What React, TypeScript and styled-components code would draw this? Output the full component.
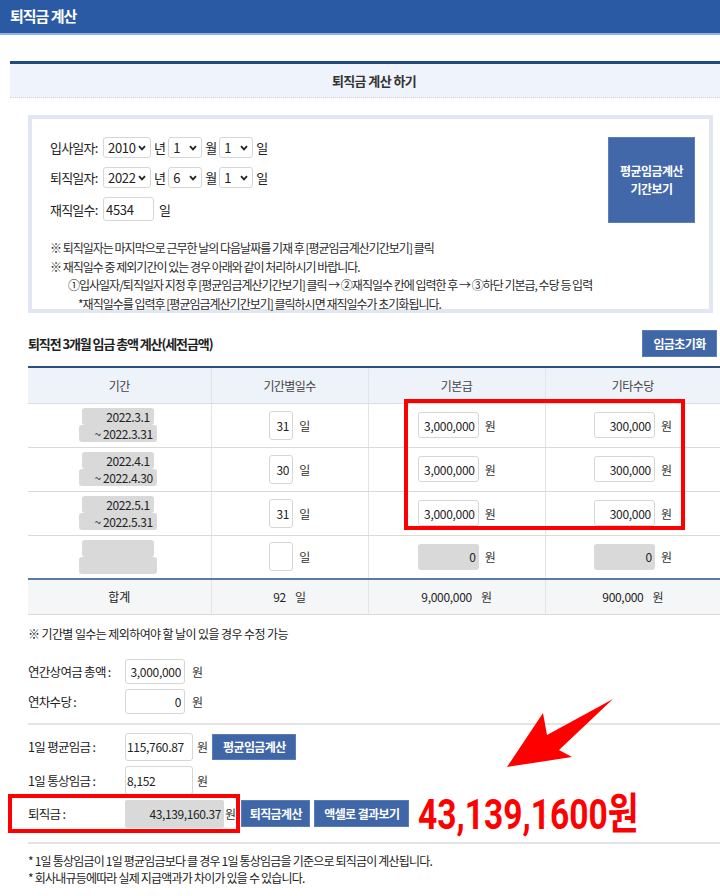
import React from "react";
import styled, { createGlobalStyle } from "styled-components";

const GlobalStyle = createGlobalStyle`
  * { box-sizing: border-box; }
  html, body { margin: 0; padding: 0; background: #ffffff; }
  body {
    font-family: "Noto Sans CJK KR", "Noto Sans", sans-serif;
    color: #333;
    font-size: 13px;
  }
  input, select, button { font-family: inherit; }
`;

const Page = styled.div`
  position: relative;
  width: 720px;
  height: 896px;
  overflow: hidden;
`;

const TopBar = styled.header`
  height: 35px;
  padding: 0 10px 3px;
  display: flex;
  align-items: center;
  background: #2a5aa4;
  border-bottom: 2px solid #93b3e3;
`;

const TopTitle = styled.h1`
  margin: 0;
  font-size: 15px;
  font-weight: 700;
  letter-spacing: -1px;
  color: #ffffff;
`;

const SectionHead = styled.div`
  width: 728px;
  height: 37px;
  margin: 26px 0 0 10px;
  display: flex;
  align-items: center;
  justify-content: center;
  background: #eff3fb;
  border-top: 3px solid #1e4a7d;
  border-bottom: 1px dotted #d4d4d4;
  font-size: 13px;
  font-weight: 700;
  letter-spacing: -0.6px;
  color: #333;
`;

const Content = styled.main`
  padding-left: 28px;
`;

const FormBox = styled.section`
  margin: 17px 7px 0 0;
  height: 198px;
  padding: 18px 14px 0 18px;
  border: 4px solid #e2e6f3;
`;

const FormTop = styled.div`
  display: flex;
  justify-content: space-between;
  align-items: flex-start;
`;

const FieldStack = styled.div`
  display: grid;
  row-gap: 9px;
`;

const DateRow = styled.div<{ $h?: number }>`
  display: flex;
  align-items: center;
  gap: 3px;
  height: ${(p) => p.$h ?? 21}px;
  font-size: 13px;
  letter-spacing: -0.8px;
  color: #222;
`;

const RowLabel = styled.span`
  width: 50px;
  white-space: nowrap;
`;

const SelectWrap = styled.span<{ $w: number }>`
  width: ${(p) => p.$w}px;
  height: 21px;
  display: inline-flex;
  align-items: center;
  border: 1px solid #d6d6d6;
  border-radius: 3px;
  background: #fff;
`;

const Select = styled.select`
  flex: 1;
  min-width: 0;
  height: 100%;
  padding: 0 0 0 4px;
  border: none;
  background: transparent;
  appearance: none;
  font-size: 13px;
  color: #222;
  letter-spacing: -0.3px;
  outline: none;
`;

const Chevron = styled.svg`
  width: 8px;
  height: 6px;
  margin-right: 4px;
  flex: none;
`;

const DaysField = styled.input`
  width: 51px;
  height: 24px;
  padding: 0 2px;
  border: 1px solid #d6d6d6;
  border-radius: 3px;
  font-size: 13px;
  color: #222;
  letter-spacing: -0.3px;
  margin-right: 2px;
`;

const PeriodButton = styled.button`
  width: 87px;
  height: 86px;
  border: 1px solid #5b7fba;
  background: #4268aa;
  color: #fff;
  font-size: 12px;
  font-weight: 700;
  line-height: 18px;
  letter-spacing: -0.5px;
  cursor: pointer;
`;

const Notes = styled.div`
  margin-top: 16px;
  font-size: 12px;
  line-height: 18.5px;
  letter-spacing: -1px;
  color: #2a2a2a;
`;

const NoteLine = styled.div<{ $indent?: number }>`
  padding-left: ${(p) => p.$indent ?? 0}px;
  white-space: nowrap;
`;

const SubHeader = styled.div`
  margin-top: 17px;
  padding-right: 3px;
  display: flex;
  justify-content: space-between;
  align-items: center;
`;

const SubTitle = styled.h2`
  margin: 0;
  font-size: 13px;
  font-weight: 700;
  letter-spacing: -1.1px;
  color: #222;
`;

const BlueButton = styled.button<{ $w: number; $h: number }>`
  width: ${(p) => p.$w}px;
  height: ${(p) => p.$h}px;
  padding: 0;
  border: 1px solid #5a7db8;
  background: #3f67a8;
  color: #fff;
  font-size: 12px;
  font-weight: 700;
  letter-spacing: -0.6px;
  white-space: nowrap;
  cursor: pointer;
`;

const WageTable = styled.table`
  margin-top: 9px;
  width: 692px;
  border-collapse: collapse;
  table-layout: fixed;
  border-top: 2px solid #2b4f80;
`;

const Th = styled.th`
  height: 36px;
  background: #eef2f9;
  font-size: 12px;
  font-weight: 400;
  color: #444;
  letter-spacing: -0.6px;
  border-right: 1px solid #e0e4eb;
  border-bottom: 1px solid #dcdcdc;

  &:last-child { border-right: none; }
`;

const Td = styled.td<{ $total?: boolean }>`
  height: ${(p) => (p.$total ? 35 : 44)}px;
  padding: 0;
  text-align: center;
  font-size: 12px;
  color: #222;
  background: ${(p) => (p.$total ? "#f5f6f8" : "#fff")};
  border-top: ${(p) => (p.$total ? "2px solid #5b7ba6" : "none")};
  border-bottom: 1px solid #dadada;
  border-right: 1px solid #e4e4e4;

  &:last-child { border-right: none; }
`;

const Cell = styled.div`
  display: flex;
  justify-content: center;
  align-items: center;
  gap: 6px;
  letter-spacing: -0.3px;
`;

const DateStack = styled.div`
  display: flex;
  flex-direction: column;
  align-items: center;
  margin-left: -3px;
`;

const DateBox = styled.div<{ $w: number }>`
  width: ${(p) => p.$w}px;
  height: 17px;
  padding-right: 4px;
  background: #d9d9d9;
  border-radius: 3px;
  text-align: right;
  font-size: 12px;
  line-height: 17px;
  letter-spacing: -0.4px;
  color: #222;
`;

const NumField = styled.input<{ $w: number; $h: number; $grey?: boolean; $left?: boolean }>`
  width: ${(p) => p.$w}px;
  height: ${(p) => p.$h}px;
  padding: 0 ${(p) => (p.$left ? 1 : 3)}px;
  border: ${(p) => (p.$grey ? "none" : "1px solid #d6d6d6")};
  border-radius: 3px;
  background: ${(p) => (p.$grey ? "#d9d9d9" : "#fff")};
  text-align: ${(p) => (p.$left ? "left" : "right")};
  font-size: 12px;
  letter-spacing: -0.3px;
  color: #222;
`;

const Unit = styled.span<{ $gap?: number }>`
  margin-left: ${(p) => p.$gap ?? 0}px;
  font-size: 12px;
  color: #333;
`;

const TableNote = styled.p`
  margin: 10px 0 0;
  font-size: 12px;
  line-height: 18px;
  letter-spacing: -0.6px;
  color: #222;
`;

const FieldBlock = styled.div<{ $top: number; $gap: number }>`
  margin-top: ${(p) => p.$top}px;
  display: grid;
  row-gap: ${(p) => p.$gap}px;
`;

const FieldRow = styled.div<{ $h: number }>`
  height: ${(p) => p.$h}px;
  display: flex;
  align-items: center;
  font-size: 12.5px;
  letter-spacing: -0.7px;
`;

const FieldLabel = styled.span`
  width: 97px;
  white-space: nowrap;
  color: #222;
`;

const Divider = styled.hr<{ $top: number }>`
  margin: ${(p) => p.$top}px 0 0;
  border: none;
  border-top: 2px solid #e4e4e4;
`;

const ResultBox = styled.div`
  width: 99px;
  height: 28px;
  padding-right: 3px;
  display: flex;
  align-items: center;
  justify-content: flex-end;
  background: #d9d9d9;
  border-radius: 2px;
  font-size: 12px;
  letter-spacing: -0.4px;
  color: #222;
`;

const ButtonPair = styled.div`
  display: flex;
  gap: 4px;
  margin-left: 6px;
`;

const BigAmount = styled.span`
  display: inline-block;
  height: 28px;
  margin-left: 9px;
  font-family: Roboto, "Noto Sans CJK KR", sans-serif;
  font-size: 43px;
  font-weight: 700;
  line-height: 28px;
  letter-spacing: 0;
  color: #ff0000;
  white-space: nowrap;
  transform: scaleX(0.78);
  transform-origin: left center;
`;

const Footnotes = styled.div`
  margin-top: 8px;
  font-size: 12px;
  line-height: 17px;
  letter-spacing: -0.8px;
  color: #222;
`;

const RedFrame = styled.div`
  position: absolute;
  border: 4px solid #ff0000;
  pointer-events: none;
`;

const ArrowLayer = styled.svg`
  position: absolute;
  left: 0;
  top: 0;
  pointer-events: none;
`;

const ChevronIcon = () => (
  <Chevron viewBox="0 0 8 6">
    <path d="M1 1.2 L4 4.4 L7 1.2" fill="none" stroke="#222" strokeWidth="1.8" />
  </Chevron>
);

const DateSelect = ({ value, width, options }: { value: string; width: number; options: string[] }) => (
  <SelectWrap $w={width}>
    <Select value={value} onChange={() => {}}>
      {options.map((o) => (
        <option key={o}>{o}</option>
      ))}
    </Select>
    <ChevronIcon />
  </SelectWrap>
);

const years = ["2010", "2022"];
const months = Array.from({ length: 12 }, (_, i) => String(i + 1));
const days = Array.from({ length: 31 }, (_, i) => String(i + 1));

const periods = [
  { from: "2022.3.1", to: "~ 2022.3.31", days: "31", base: "3,000,000", extra: "300,000" },
  { from: "2022.4.1", to: "~ 2022.4.30", days: "30", base: "3,000,000", extra: "300,000" },
  { from: "2022.5.1", to: "~ 2022.5.31", days: "31", base: "3,000,000", extra: "300,000" },
  { from: "", to: "", days: "", base: "0", extra: "0", empty: true },
];

export default function App() {
  return (
    <Page>
      <GlobalStyle />
      <TopBar>
        <TopTitle>퇴직금 계산</TopTitle>
      </TopBar>

      <SectionHead>퇴직금 계산 하기</SectionHead>

      <Content>
        <FormBox>
          <FormTop>
            <FieldStack>
              <DateRow>
                <RowLabel>입사일자:</RowLabel>
                <DateSelect value="2010" width={48} options={years} />
                <span>년</span>
                <DateSelect value="1" width={34} options={months} />
                <span>월</span>
                <DateSelect value="1" width={34} options={days} />
                <span>일</span>
              </DateRow>
              <DateRow>
                <RowLabel>퇴직일자:</RowLabel>
                <DateSelect value="2022" width={48} options={years} />
                <span>년</span>
                <DateSelect value="6" width={34} options={months} />
                <span>월</span>
                <DateSelect value="1" width={34} options={days} />
                <span>일</span>
              </DateRow>
              <DateRow $h={24}>
                <RowLabel>재직일수:</RowLabel>
                <DaysField readOnly value="4534" />
                <span>일</span>
              </DateRow>
            </FieldStack>
            <PeriodButton>
              평균임금계산
              <br />
              기간보기
            </PeriodButton>
          </FormTop>
          <Notes>
            <NoteLine>※ 퇴직일자는 마지막으로 근무한 날의 다음날짜를 기재 후 [평균임금계산기간보기] 클릭</NoteLine>
            <NoteLine>※ 재직일수 중 제외기간이 있는 경우 아래와 같이 처리하시기 바랍니다.</NoteLine>
            <NoteLine $indent={18}>
              ①입사일자/퇴직일자 지정 후 [평균임금계산기간보기] 클릭 → ②재직일수 칸에 입력한 후 → ③하단 기본급, 수당 등 입력
            </NoteLine>
            <NoteLine $indent={28}>*재직일수를 입력후 [평균임금계산기간보기] 클릭하시면 재직일수가 초기화됩니다.</NoteLine>
          </Notes>
        </FormBox>

        <SubHeader>
          <SubTitle>퇴직전 3개월 임금 총액 계산(세전금액)</SubTitle>
          <BlueButton $w={75} $h={27}>
            임금초기화
          </BlueButton>
        </SubHeader>

        <WageTable>
          <colgroup>
            <col style={{ width: 183 }} />
            <col style={{ width: 157 }} />
            <col style={{ width: 177 }} />
            <col style={{ width: 175 }} />
          </colgroup>
          <thead>
            <tr>
              <Th>기간</Th>
              <Th>기간별일수</Th>
              <Th>기본급</Th>
              <Th>기타수당</Th>
            </tr>
          </thead>
          <tbody>
            {periods.map((p, i) => (
              <tr key={i}>
                <Td>
                  <DateStack>
                    <DateBox $w={72}>{p.from}</DateBox>
                    <DateBox $w={78}>{p.to}</DateBox>
                  </DateStack>
                </Td>
                <Td>
                  <Cell>
                    <NumField $w={24} $h={29} readOnly value={p.days} />
                    <Unit>일</Unit>
                  </Cell>
                </Td>
                <Td>
                  <Cell>
                    <NumField $w={61} $h={26} $grey={p.empty} readOnly value={p.base} />
                    <Unit>원</Unit>
                  </Cell>
                </Td>
                <Td>
                  <Cell>
                    <NumField $w={61} $h={26} $grey={p.empty} readOnly value={p.extra} />
                    <Unit>원</Unit>
                  </Cell>
                </Td>
              </tr>
            ))}
            <tr>
              <Td $total>합계</Td>
              <Td $total>
                <Cell>
                  <span>92</span>
                  <Unit $gap={3}>일</Unit>
                </Cell>
              </Td>
              <Td $total>
                <Cell>
                  <span>9,000,000</span>
                  <Unit $gap={3}>원</Unit>
                </Cell>
              </Td>
              <Td $total>
                <Cell>
                  <span>900,000</span>
                  <Unit $gap={3}>원</Unit>
                </Cell>
              </Td>
            </tr>
          </tbody>
        </WageTable>

        <TableNote>※ 기간별 일수는 제외하여야 할 날이 있을 경우 수정 가능</TableNote>

        <FieldBlock $top={16} $gap={5}>
          <FieldRow $h={25}>
            <FieldLabel>연간상여금 총액 :</FieldLabel>
            <NumField $w={60} $h={25} readOnly value="3,000,000" />
            <Unit $gap={7}>원</Unit>
          </FieldRow>
          <FieldRow $h={25}>
            <FieldLabel>연차수당 :</FieldLabel>
            <NumField $w={60} $h={25} readOnly value="0" />
            <Unit $gap={7}>원</Unit>
          </FieldRow>
        </FieldBlock>

        <Divider $top={9} />

        <FieldBlock $top={8} $gap={5}>
          <FieldRow $h={28}>
            <FieldLabel>1일 평균임금 :</FieldLabel>
            <NumField $w={68} $h={28} $left readOnly value="115,760.87" />
            <Unit $gap={4}>원</Unit>
            <BlueButton $w={84} $h={26} style={{ marginLeft: 5 }}>
              평균임금계산
            </BlueButton>
          </FieldRow>
          <FieldRow $h={29}>
            <FieldLabel>1일 통상임금 :</FieldLabel>
            <NumField $w={68} $h={29} $left readOnly value="8,152" />
            <Unit $gap={4}>원</Unit>
          </FieldRow>
          <FieldRow $h={28}>
            <FieldLabel>퇴직금 :</FieldLabel>
            <ResultBox>43,139,160.37</ResultBox>
            <Unit $gap={1}>원</Unit>
            <ButtonPair>
              <BlueButton $w={69} $h={27}>
                퇴직금계산
              </BlueButton>
              <BlueButton $w={95} $h={27}>
                액셀로 결과보기
              </BlueButton>
            </ButtonPair>
            <BigAmount>43,139,1600원</BigAmount>
          </FieldRow>
        </FieldBlock>

        <Divider $top={14} />

        <Footnotes>
          <div>* 1일 통상임금이 1일 평균임금보다 클 경우 1일 통상임금을 기준으로 퇴직금이 계산됩니다.</div>
          <div>* 회사내규등에따라 실제 지급액과가 차이가 있을 수 있습니다.</div>
        </Footnotes>
      </Content>

      <RedFrame style={{ left: 404, top: 399, width: 281, height: 131 }} />
      <RedFrame style={{ left: 8, top: 794, width: 232, height: 39 }} />
      <ArrowLayer width="720" height="896" viewBox="0 0 720 896">
        <polygon points="613,699 559,750 572,757 507,767 543,713 547,735" fill="#ff0000" />
      </ArrowLayer>
    </Page>
  );
}
